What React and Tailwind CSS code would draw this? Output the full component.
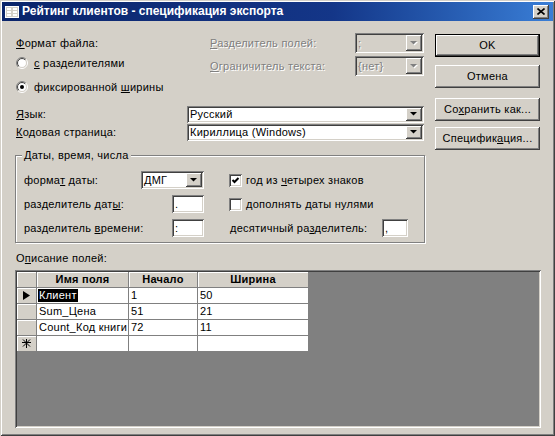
const raised =
  'shadow-[inset_-1px_-1px_#404040,inset_1px_1px_#ffffff,inset_-2px_-2px_#808080,inset_2px_2px_#d4d0c8]';
const sunken =
  'shadow-[inset_1px_1px_#808080,inset_-1px_-1px_#ffffff,inset_2px_2px_#404040,inset_-2px_-2px_#d4d0c8]';
const dim = 'text-[#808080] [text-shadow:1px_1px_0_#ffffff]';

function U({ children }) {
  return <span className="underline underline-offset-1 decoration-1">{children}</span>;
}

function Arrow({ disabled }) {
  return (
    <svg width="8" height="5" viewBox="0 0 8 5">
      {disabled && <polygon points="1,1 8,1 4.5,4.5" fill="#ffffff" />}
      <polygon points="0,0 7,0 3.5,3.5" fill={disabled ? '#808080' : '#000000'} />
    </svg>
  );
}

function Combo({ className, value, disabled }) {
  return (
    <div
      className={`flex p-[2px] ${sunken} ${disabled ? 'bg-[#d4d0c8]' : 'bg-white'} ${className}`}
    >
      <div
        className={`flex-1 flex items-center pl-[1px] overflow-hidden whitespace-nowrap ${disabled ? dim : ''}`}
      >
        {value}
      </div>
      <div className={`w-[16px] flex items-center justify-center bg-[#d4d0c8] ${raised}`}>
        <Arrow disabled={disabled} />
      </div>
    </div>
  );
}

function Field({ className, value }) {
  return (
    <div className={`flex items-center pl-[3px] bg-white ${sunken} ${className}`}>{value}</div>
  );
}

function Radio({ checked, id }) {
  return (
    <svg width="12" height="12" viewBox="0 0 12 12" className="shrink-0">
      <defs>
        <linearGradient id={`${id}o`} x1="0" y1="0" x2="1" y2="1">
          <stop offset="0.5" stopColor="#808080" />
          <stop offset="0.5" stopColor="#ffffff" />
        </linearGradient>
        <linearGradient id={`${id}i`} x1="0" y1="0" x2="1" y2="1">
          <stop offset="0.5" stopColor="#404040" />
          <stop offset="0.5" stopColor="#d4d0c8" />
        </linearGradient>
      </defs>
      <circle cx="6" cy="6" r="5.5" fill="none" stroke={`url(#${id}o)`} />
      <circle cx="6" cy="6" r="4.5" fill="#ffffff" stroke={`url(#${id}i)`} />
      {checked && <circle cx="6" cy="6" r="2" fill="#000000" />}
    </svg>
  );
}

function Check({ checked }) {
  return (
    <div className={`w-[13px] h-[13px] shrink-0 bg-white ${sunken}`}>
      {checked && (
        <svg width="13" height="13" viewBox="0 0 13 13">
          <polyline points="3.5,6 5.5,8 9.5,4" fill="none" stroke="#000000" strokeWidth="2" />
        </svg>
      )}
    </div>
  );
}

function Btn({ children, main, className }) {
  return (
    <div
      className={`w-[105px] h-[23px] flex items-center justify-center bg-[#d4d0c8] ${main ? 'border border-black' : ''} ${raised} ${className}`}
    >
      {children}
    </div>
  );
}

const cols = [
  { w: 'w-[92px]', label: 'Имя поля' },
  { w: 'w-[69px]', label: 'Начало' },
  { w: 'w-[111px]', label: 'Ширина' },
];

const rows = [
  ['Клиент', '1', '50'],
  ['Sum_Цена', '51', '21'],
  ['Count_Код книги', '72', '11'],
  ['', '', ''],
];

function Selector({ kind }) {
  return (
    <div className="w-[20px] h-[16px] flex items-center justify-center bg-[#d4d0c8] border-r border-b border-[#808080] shadow-[inset_1px_1px_#ffffff]">
      {kind === 'current' && (
        <svg width="7" height="9" viewBox="0 0 7 9">
          <polygon points="0,0 7,4.5 0,9" fill="#000000" />
        </svg>
      )}
      {kind === 'new' && (
        <svg width="9" height="9" viewBox="0 0 9 9" stroke="#000000" strokeWidth="1">
          <line x1="4.5" y1="0" x2="4.5" y2="9" />
          <line x1="0" y1="3.5" x2="9" y2="3.5" />
          <line x1="1" y1="0.5" x2="8" y2="7.5" />
          <line x1="8" y1="0.5" x2="1" y2="7.5" />
        </svg>
      )}
    </div>
  );
}

export default function App() {
  return (
    <div className="w-[555px] h-[436px] overflow-hidden bg-[#d4d0c8] pt-[2px] px-[2px] text-[11px] leading-[13px] tracking-[0.25px] text-black font-['Liberation_Sans',Arial,sans-serif] shadow-[inset_1px_1px_#d4d0c8,inset_-1px_-1px_#404040,inset_2px_2px_#ffffff,inset_-2px_-2px_#808080]">
      {/* title bar */}
      <div className="h-[19px] flex items-center pl-[3px] pr-[4px] bg-linear-to-r from-[#0a246a] via-[#143688] via-60% to-[#3a7ed6]">
        <svg width="14" height="12" viewBox="0 0 14 12" className="shrink-0">
          <rect x="0.5" y="0.5" width="13" height="11" fill="#d4d0c8" stroke="#ffffff" />
          <rect x="2" y="2" width="4" height="2" fill="#ffffff" />
          <rect x="8" y="2" width="4" height="2" fill="#ffffff" />
          <rect x="2" y="5" width="4" height="2" fill="#ffffff" />
          <rect x="8" y="5" width="4" height="2" fill="#ffffff" />
          <rect x="2" y="8" width="4" height="2" fill="#ffffff" />
          <rect x="8" y="8" width="4" height="2" fill="#ffffff" />
        </svg>
        <span className="ml-[3px] text-white font-bold text-[12px] tracking-normal whitespace-nowrap">
          Рейтинг клиентов - спецификация экспорта
        </span>
        <div className={`ml-auto w-[16px] h-[14px] flex items-center justify-center bg-[#d4d0c8] ${raised}`}>
          <svg width="8" height="7" viewBox="0 0 8 7">
            <path d="M0.5 0.5 L7.5 6.5 M7.5 0.5 L0.5 6.5" stroke="#000000" strokeWidth="1.6" />
          </svg>
        </div>
      </div>

      <div className="flex">
        {/* left column */}
        <div className="ml-[14px] w-[409px] flex flex-col">
          <div className="mt-[12px] flex">
            <div className="w-[194px] flex flex-col">
              <div className="mt-[4px] h-[13px]">
                <U>Ф</U>ормат файла:
              </div>
              <div className="mt-[5px] h-[16px] flex items-center gap-[6px]">
                <Radio id="r1" />
                <span>
                  <U>с</U> разделителями
                </span>
              </div>
              <div className="mt-[8px] h-[16px] flex items-center gap-[6px]">
                <Radio id="r2" checked />
                <span>
                  фиксированной <U>ш</U>ирины
                </span>
              </div>
            </div>
            <div className="flex flex-col">
              <div className="h-[20px] flex items-center">
                <div className={`w-[145px] ${dim}`}>
                  <U>Р</U>азделитель полей:
                </div>
                <Combo className="w-[69px] h-[20px]" value=";" disabled />
              </div>
              <div className="mt-[3px] h-[20px] flex items-center">
                <div className={`w-[145px] ${dim}`}>
                  <U>О</U>граничитель текста:
                </div>
                <Combo className="w-[69px] h-[20px]" value="{нет}" disabled />
              </div>
            </div>
          </div>

          <div className="mt-[11px] h-[17px] flex items-center">
            <div className="w-[171px]">
              <U>Я</U>зык:
            </div>
            <Combo className="w-[237px] h-[17px]" value="Русский" />
          </div>
          <div className="mt-[1px] h-[17px] flex items-center">
            <div className="w-[171px]">
              <U>К</U>одовая страница:
            </div>
            <Combo className="w-[237px] h-[17px]" value="Кириллица (Windows)" />
          </div>

          {/* group box */}
          <div className="relative mt-[14px] -ml-[1px] w-[410px] h-[88px] border border-[#808080] shadow-[inset_1px_1px_#ffffff,1px_1px_#ffffff] pt-[15px] pl-[8px] flex flex-col gap-[6px]">
            <span className="absolute -top-[7px] left-[6px] px-[2px] bg-[#d4d0c8]">
              Даты, время, числа
            </span>
            <div className="h-[18px] flex items-center">
              <div className="w-[180px] flex items-center justify-between">
                <span>
                  форма<U>т</U> даты:
                </span>
                <Combo className="w-[63px] h-[18px]" value="ДМГ" />
              </div>
              <div className="ml-[25px] flex items-center gap-[4px]">
                <Check checked />
                <span>
                  год из <U>ч</U>етырех знаков
                </span>
              </div>
            </div>
            <div className="h-[18px] flex items-center">
              <div className="w-[180px] flex items-center justify-between">
                <span>
                  разделитель дат<U>ы</U>:
                </span>
                <Field className="w-[32px] h-[18px]" value="." />
              </div>
              <div className="ml-[25px] flex items-center gap-[4px]">
                <Check />
                <span>
                  <U>д</U>ополнять даты нулями
                </span>
              </div>
            </div>
            <div className="h-[18px] flex items-center">
              <div className="w-[180px] flex items-center justify-between">
                <span>
                  разделитель <U>в</U>ремени:
                </span>
                <Field className="w-[32px] h-[18px]" value=":" />
              </div>
              <div className="ml-[26px] w-[152px]">
                десятичный ра<U>з</U>делитель:
              </div>
              <Field className="w-[26px] h-[18px]" value="," />
            </div>
          </div>
        </div>

        {/* buttons */}
        <div className="ml-[10px] flex flex-col">
          <Btn main className="mt-[13px]">
            OK
          </Btn>
          <Btn className="mt-[8px]">Отмена</Btn>
          <Btn className="mt-[10px]">
            Со<U>х</U>ранить как...
          </Btn>
          <Btn className="mt-[6px]">
            Специфик<U>а</U>ция...
          </Btn>
        </div>
      </div>

      <div className="ml-[14px] mt-[9px] h-[13px]">
        О<U>п</U>исание полей:
      </div>

      {/* datasheet */}
      <div className={`ml-[13px] mt-[5px] w-[526px] h-[158px] p-[2px] bg-[#808080] ${sunken}`}>
        <div className="flex">
          <Selector />
          {cols.map((c) => (
            <div
              key={c.label}
              className={`${c.w} h-[16px] flex items-center justify-center font-bold bg-[#d4d0c8] border-r border-b border-[#808080] shadow-[inset_1px_1px_#ffffff]`}
            >
              {c.label}
            </div>
          ))}
        </div>
        {rows.map((r, i) => (
          <div key={i} className="flex">
            <Selector kind={i === 0 ? 'current' : i === 3 ? 'new' : ''} />
            {r.map((v, j) => (
              <div
                key={j}
                className={`${cols[j].w} h-[16px] flex items-center pl-[1px] bg-white border-r border-b border-[#808080] overflow-hidden whitespace-nowrap`}
              >
                {i === 0 && j === 0 ? (
                  <span className="bg-black text-white px-[1px]">{v}</span>
                ) : (
                  <span className="px-[1px]">{v}</span>
                )}
              </div>
            ))}
          </div>
        ))}
      </div>
    </div>
  );
}
